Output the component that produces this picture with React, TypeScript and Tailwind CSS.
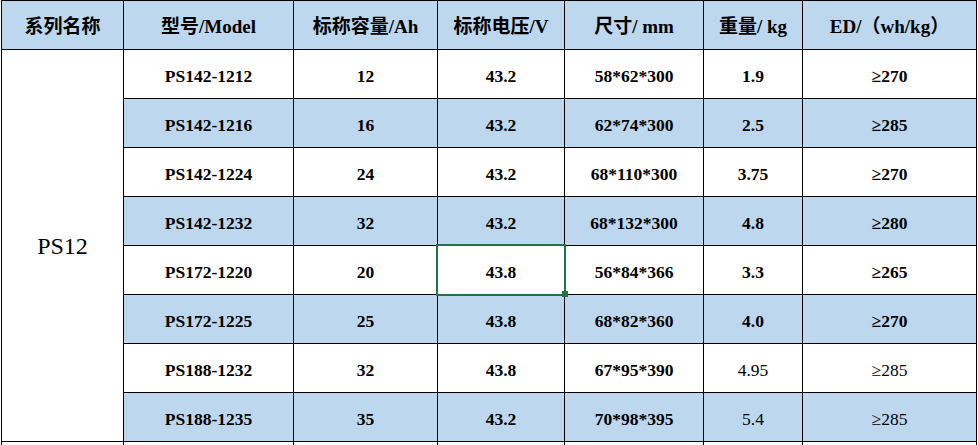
import React from "react";

const rows = [
  { m: "PS142-1212", c: "12", v: "43.2", s: "58*62*300", w: "1.9", e: "≥270", nb: false },
  { m: "PS142-1216", c: "16", v: "43.2", s: "62*74*300", w: "2.5", e: "≥285", nb: false },
  { m: "PS142-1224", c: "24", v: "43.2", s: "68*110*300", w: "3.75", e: "≥270", nb: false },
  { m: "PS142-1232", c: "32", v: "43.2", s: "68*132*300", w: "4.8", e: "≥280", nb: false },
  { m: "PS172-1220", c: "20", v: "43.8", s: "56*84*366", w: "3.3", e: "≥265", nb: false },
  { m: "PS172-1225", c: "25", v: "43.8", s: "68*82*360", w: "4.0", e: "≥270", nb: false },
  { m: "PS188-1232", c: "32", v: "43.8", s: "67*95*390", w: "4.95", e: "≥285", nb: true },
  { m: "PS188-1235", c: "35", v: "43.2", s: "70*98*395", w: "5.4", e: "≥285", nb: true },
];

const headers = ["系列名称", "型号/Model", "标称容量/Ah", "标称电压/V", "尺寸/ mm", "重量/ kg", "ED/（wh/kg）"];
const widths = ["w-[122px]", "w-[170px]", "w-[144px]", "w-[127px]", "w-[139px]", "w-[99px]", "w-[174px]"];

const cell = "border border-black p-0 pt-[4px] text-center align-middle text-[17.5px] font-['Liberation_Serif','Times_New_Roman','Noto_Sans_CJK_SC',serif]";

export default function App() {
  return (
    <div className="relative w-[978px] h-[445px] overflow-hidden bg-white text-black font-['Liberation_Serif','Times_New_Roman','Noto_Sans_CJK_SC',serif]">
      <table className="ml-[1px] border-collapse table-fixed w-[975px] font-['Liberation_Serif','Times_New_Roman','Noto_Sans_CJK_SC',serif]">
        <colgroup>
          {widths.map((w, i) => (
            <col key={i} className={w} />
          ))}
        </colgroup>
        <thead>
          <tr className="h-[49px] bg-[#bdd7ee]">
            {headers.map((h, i) => (
              <th key={i} className="border border-black p-0 pt-[3px] text-center align-middle text-[19px] font-bold leading-none whitespace-nowrap font-['Liberation_Serif','Times_New_Roman','Noto_Sans_CJK_SC',serif]">
                {h}
              </th>
            ))}
          </tr>
        </thead>
        <tbody>
          {rows.map((r, i) => (
            <tr key={i} className={`h-[49px] ${i % 2 === 1 ? "bg-[#bdd7ee]" : "bg-white"}`}>
              {i === 0 && (
                <td rowSpan={8} className="border border-black bg-white p-0 text-center align-middle text-[24px] font-normal font-['Liberation_Serif','Times_New_Roman',serif]">
                  PS12
                </td>
              )}
              <td className={`${cell} font-bold`}>{r.m}</td>
              <td className={`${cell} font-bold`}>{r.c}</td>
              <td className={`${cell} font-bold`}>{r.v}</td>
              <td className={`${cell} font-bold`}>{r.s}</td>
              <td className={`${cell} ${r.nb ? "font-normal" : "font-bold"}`}>{r.w}</td>
              <td className={`${cell} ${r.nb ? "font-normal" : "font-bold"}`}>{r.e}</td>
            </tr>
          ))}
          <tr className="h-[49px] bg-white">
            {widths.map((_, i) => (
              <td key={i} className="border border-black p-0"></td>
            ))}
          </tr>
        </tbody>
      </table>
      <div className="absolute left-[436px] top-[244px] w-[130px] h-[52px] border-2 border-[#217346]" />
      <div className="absolute left-[562px] top-[291px] w-[6px] h-[6px] bg-[#217346]" />
    </div>
  );
}
